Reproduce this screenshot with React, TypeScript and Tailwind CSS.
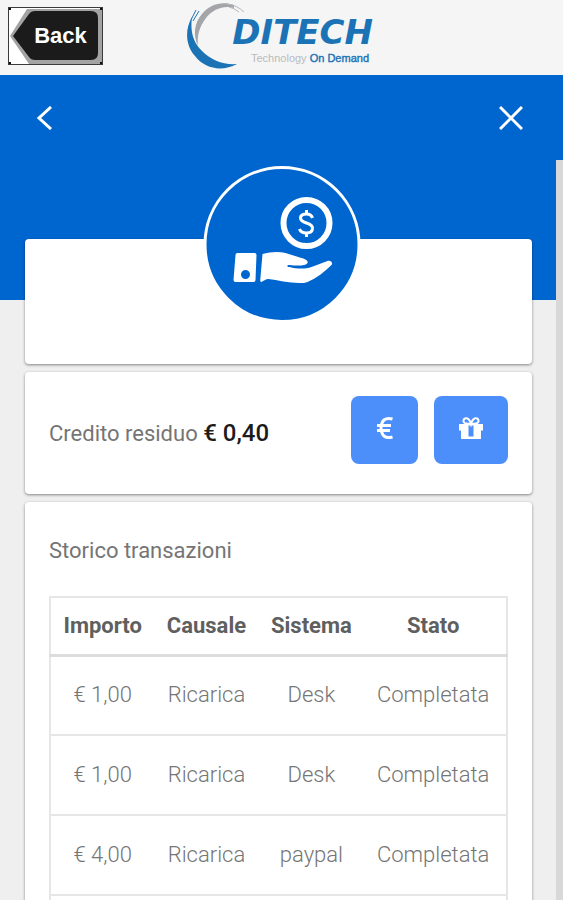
import { useState } from 'react';

interface Transaction {
  id: number;
  amount: string;
  reason: string;
  system: string;
  status: string;
}

const transactions: Transaction[] = [
  { id: 1, amount: '€ 1,00', reason: 'Ricarica', system: 'Desk', status: 'Completata' },
  { id: 2, amount: '€ 1,00', reason: 'Ricarica', system: 'Desk', status: 'Completata' },
  { id: 3, amount: '€ 4,00', reason: 'Ricarica', system: 'paypal', status: 'Completata' },
];

function BackButton() {
  return (
    <button
      type="button"
      className="relative flex h-[58px] w-[95px] items-center justify-center border border-[#3a3a3a] bg-white pl-2.5"
    >
      <svg viewBox="0 0 93 56" className="absolute inset-0 h-full w-full" aria-hidden="true">
        <path d="M1 28 18 1H93V56H20Z" fill="#a3a3a3" />
        <path d="M4 28 20 6Q22 3 26 3H82Q89 3 89 10V45Q89 52 82 52H26Q22 52 20 49Z" fill="#1b1b1b" />
        <path d="M0 0H2V2H0ZM91 0H93V2H91ZM0 54H2V56H0ZM91 54H93V56H91Z" fill="#111" />
      </svg>
      <span className="relative font-['Liberation_Sans',sans-serif] text-[22px] leading-7 font-bold text-white">
        Back
      </span>
    </button>
  );
}

function Logo() {
  return (
    <div className="relative h-[70px] w-[195px]">
      <svg viewBox="0 0 195 70" className="absolute inset-0 h-full w-full" aria-hidden="true">
        <path
          d="M50 8C40 5 29 9 22 18C15 27 13 36 14 46C9 35 10 23 18 14C26 4 38 1 50 5Z"
          fill="#a3a5a8"
        />
        <path d="M8 17C1 29 1 45 11 56C21 69 38 72 53 64C39 65 27 60 18 51C9 42 6 31 8 17Z" fill="#1b73b5" />
        <path d="M12 10 7 20M15 11 9 21" stroke="#1b73b5" strokeWidth="1" />
        <path d="M43 4Q53 5 60 12M45 7Q50 8 55 12" fill="none" stroke="#b5b7b9" strokeWidth="1" />
      </svg>
      <div className="relative flex flex-col items-end pt-3 pr-1.5">
        <span className="font-['DejaVu_Sans',sans-serif] text-[34px] leading-10 font-bold text-[#1b73b5] italic">
          DITECH
        </span>
        <span className="pr-1 font-['Liberation_Sans',sans-serif] text-[11px] leading-3 text-[#b9bbbd]">
          Technology <span className="text-[#1b73b5] [-webkit-text-stroke:0.4px]">On Demand</span>
        </span>
      </div>
    </div>
  );
}

function HandCoin() {
  return (
    <svg viewBox="0 0 151 151" className="h-full w-full" aria-hidden="true">
      <circle cx="100" cy="54" r="23" fill="none" stroke="#fff" strokeWidth="6" />
      <path
        d="M106 49C105 46 103 45 100 45C96 45 94 46 94 49C94 55 106 53 106 59C106 63 103 64 100 64C96 64 94 63 93 60M100 41V45M100 64V68"
        fill="none"
        stroke="#fff"
        strokeWidth="3"
      />
      <path
        fillRule="evenodd"
        d="M31 84H48Q50 84 50 86L49 111Q49 113 47 113H29Q27 113 27 111L29 86Q29 84 31 84ZM39 101A4.500 4.500 0 1 0 39 110A4.500 4.500 0 1 0 39 101Z"
        fill="#fff"
      />
      <path
        d="M56 85C63 83 72 82 79 84L95 89C99 90 102 92 101 94C99 97 91 97 83 96C80 96 80 98 83 98C91 100 99 100 105 98L121 92C124 91 127 94 125 96C118 103 110 109 101 113C99 114 96 114 93 114C82 114 71 111 62 110C59 110 57 112 55 113C53 113 54 110 54 108Z"
        fill="#fff"
      />
    </svg>
  );
}

function EuroIcon() {
  return (
    <svg viewBox="0 0 18 24" className="h-6 w-[18px]" aria-hidden="true">
      <path
        d="M16.500 3C9.500 1 5.500 4 5 12C5.500 20 9.500 23 16.500 21M1 9.500H15M1 14.500H14"
        fill="none"
        stroke="#fff"
        strokeWidth="3"
      />
    </svg>
  );
}

function GiftIcon() {
  return (
    <svg viewBox="0 0 26 24" className="h-6 w-[26px]" aria-hidden="true">
      <path
        d="M13 8C10 8 5 8 5.500 4.500C6 1 11 1 13 8C15 1 20 1 20.500 4.500C21 8 16 8 13 8Z"
        fill="none"
        stroke="#fff"
        strokeWidth="2"
      />
      <path fillRule="evenodd" d="M1 8H25V14.500H23V23H3V14.500H1ZM10.500 9.500V20.500H15.500V9.500Z" fill="#fff" />
    </svg>
  );
}

export default function App() {
  const [open, setOpen] = useState(true);

  return (
    <div className="flex h-screen flex-col overflow-hidden bg-[#efefef] font-[Roboto,sans-serif] text-[#757575]">
      <header className="grid h-[75px] shrink-0 grid-cols-[1fr_auto_1fr] items-start bg-[#f5f5f5] px-2">
        <div className="pt-[7px]">
          <BackButton />
        </div>
        <Logo />
      </header>

      <nav className="flex h-[85px] shrink-0 items-center justify-between bg-[#0066cf] px-8">
        <button type="button" aria-label="Indietro">
          <svg viewBox="0 0 24 24" className="size-6" aria-hidden="true">
            <path d="M19 1 7 12 19 23" fill="none" stroke="#fff" strokeWidth="3" />
          </svg>
        </button>
        <button type="button" aria-label="Chiudi" onClick={() => setOpen(!open)} className="pr-2">
          <svg viewBox="0 0 24 24" className="size-6" aria-hidden="true">
            <path d="M1 1 23 23M23 1 1 23" fill="none" stroke="#fff" strokeWidth="3" />
          </svg>
        </button>
      </nav>

      {open && (
        <main className="relative min-h-0 flex-1 overflow-hidden">
          <div className="h-[140px] bg-[#0066cf]" />
          <div className="absolute top-1.5 left-1/2 size-[157px] -translate-x-1/2 rounded-full border-3 border-white bg-[#0066cf]">
            <HandCoin />
          </div>

          <div className="-mt-[61px] flex flex-col gap-2 pr-[31px] pl-[25px]">
            <section className="h-[125px] rounded-sm bg-white shadow-[0_1px_3px_rgba(0,0,0,0.45)]" />

            <section className="flex items-center justify-between rounded-sm bg-white p-6 pb-[30px] shadow-[0_1px_3px_rgba(0,0,0,0.45)]">
              <p className="pt-1.5 text-[22px] leading-7">
                Credito residuo <span className="text-2xl leading-7 font-medium text-[#1c1c1c]">€ 0,40</span>
              </p>
              <div className="flex gap-4">
                <button
                  type="button"
                  aria-label="Ricarica credito"
                  className="flex h-[68px] w-[67px] items-center justify-center rounded-lg bg-[#4c8ffb] pb-1"
                >
                  <EuroIcon />
                </button>
                <button
                  type="button"
                  aria-label="Regala credito"
                  className="flex h-[68px] w-[74px] items-center justify-center rounded-lg bg-[#4c8ffb] pb-1"
                >
                  <GiftIcon />
                </button>
              </div>
            </section>

            <section className="rounded-sm bg-white px-6 pt-[35px] pb-6 shadow-[0_1px_3px_rgba(0,0,0,0.45)]">
              <h2 className="text-[22px] leading-7">Storico transazioni</h2>
              <table className="mt-[31px] w-full border-collapse border-2 border-[#e6e6e6] text-center text-[22px] leading-7">
                <thead>
                  <tr className="h-[58px] border-b-3 border-[#dcdcdc] text-[#5f5f5f]">
                    <th className="px-3 font-bold">Importo</th>
                    <th className="px-3 font-bold">Causale</th>
                    <th className="px-3 font-bold">Sistema</th>
                    <th className="pr-4 pl-3 font-bold">Stato</th>
                  </tr>
                </thead>
                <tbody className="font-light">
                  {transactions.map((t) => (
                    <tr key={t.id} className="h-20 border-b-2 border-[#e6e6e6]">
                      <td>{t.amount}</td>
                      <td>{t.reason}</td>
                      <td>{t.system}</td>
                      <td className="pr-4 pl-3">{t.status}</td>
                    </tr>
                  ))}
                </tbody>
                <tfoot>
                  <tr className="h-20">
                    <td colSpan={4} />
                  </tr>
                </tfoot>
              </table>
            </section>
          </div>

          {/* scroll thumb */}
          <div className="absolute inset-y-0 right-0 w-[7px] bg-[#d8d8d8]" />
        </main>
      )}
    </div>
  );
}
